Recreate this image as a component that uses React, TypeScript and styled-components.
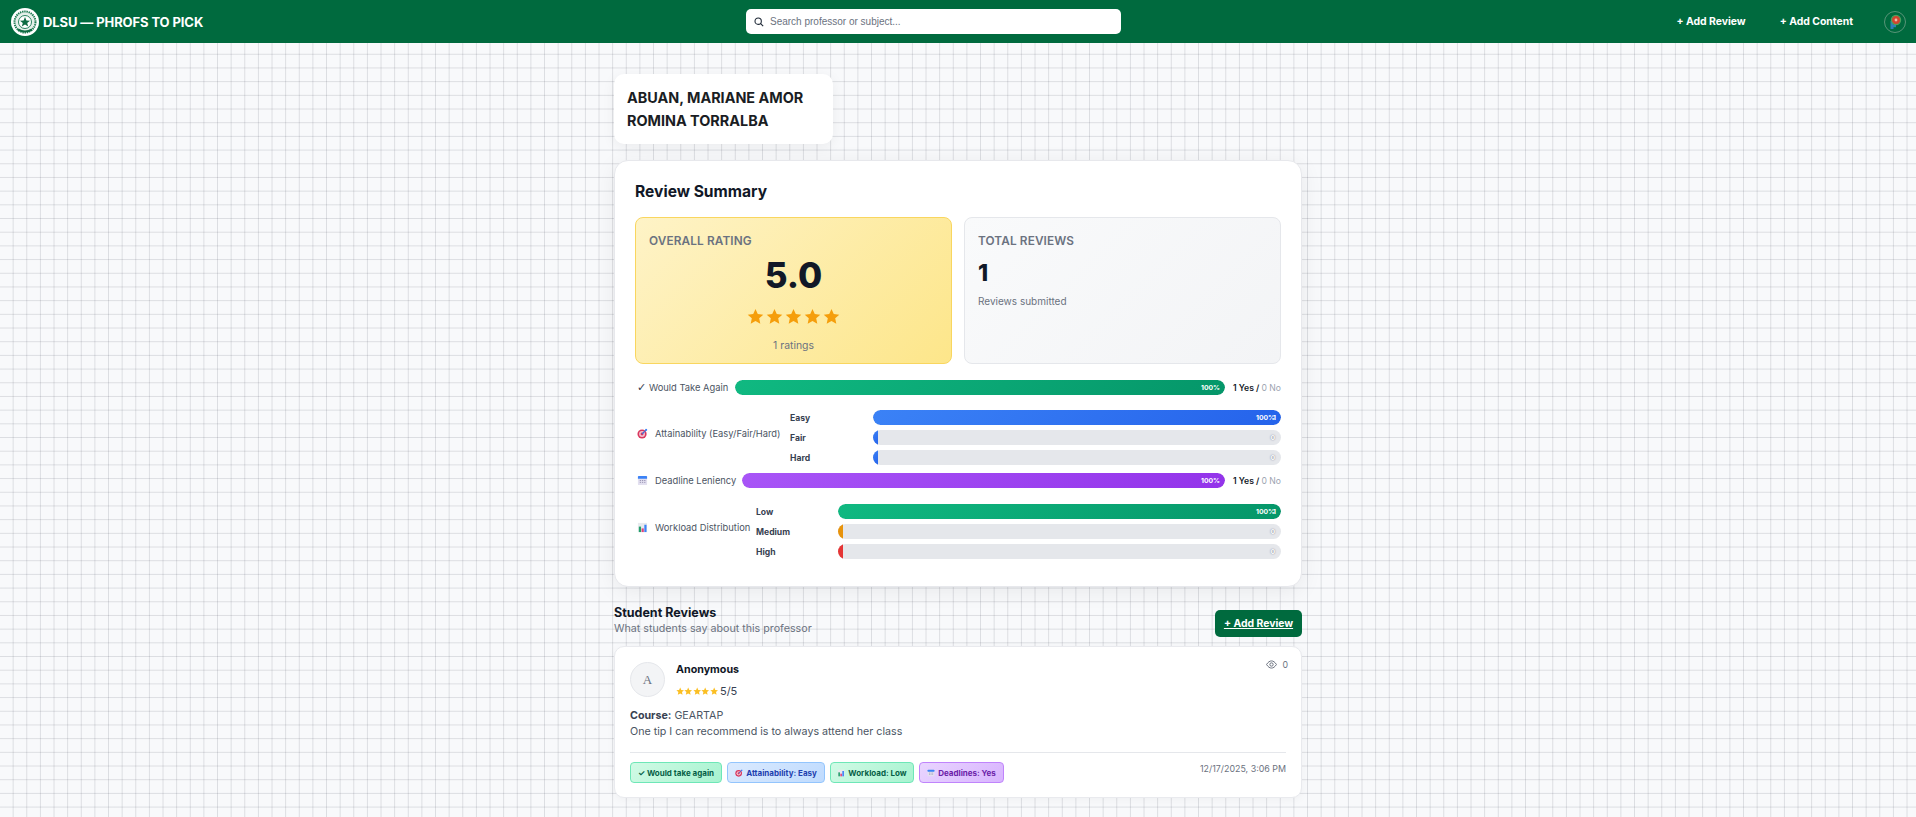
import React from "react";
import styled, { createGlobalStyle } from "styled-components";

const Global = createGlobalStyle`
  html, body { margin: 0; padding: 0; }
  body {
    font-family: Inter, "Noto Sans", sans-serif;
    background-color: #f8f9fb;
    background-image:
      linear-gradient(to right, transparent calc(100% - 1px), rgba(60,65,80,.15) calc(100% - 1px)),
      linear-gradient(to bottom, transparent calc(100% - 1px), rgba(60,65,80,.15) calc(100% - 1px));
    background-size: 13.63px 13.7px;
    color: #111827;
  }
  * { box-sizing: border-box; }
`;

const Header = styled.header`
  height: 43px;
  background: #006a3e;
  display: grid;
  grid-template-columns: 735px 375px 1fr;
  align-items: center;
  padding: 0 10px 0 11px;
`;
const Brand = styled.div`display: flex; align-items: center; gap: 4px;`;
const BrandName = styled.span`
  color: #fff; font-size: 13px; font-weight: 700; letter-spacing: -.1px; white-space: nowrap;
`;
const Search = styled.div`
  height: 25px; background: #fff; border-radius: 5px; display: flex; align-items: center;
  gap: 6px; padding-left: 8px; font-family: "Liberation Sans", Arial, sans-serif; font-size: 10px; color: #6b7280;
`;
const Nav = styled.nav`display: flex; align-items: center; justify-content: flex-end;`;
const NavLink = styled.a<{ $mr: number }>`
  color: #fff; font-size: 10.4px; font-weight: 700; white-space: nowrap; margin-right: ${p => p.$mr}px;
`;
const Main = styled.main`
  width: 688px; margin: 0 auto; padding: 31px 0 20px;
`;
const NameCard = styled.div`
  width: 219px; height: 70px; background: #fff; border-radius: 10px; padding: 12px 13px;
  box-shadow: 0 3px 14px rgba(0,0,0,.06); font-size: 14.4px; font-weight: 700; line-height: 23px; color: #1a1d23;
`;
const SummaryCard = styled.section`
  margin-top: 16px; height: 427px; background: #fff; border: 1px solid #e7e8ec; border-radius: 14px;
  padding: 21px 20px 0; box-shadow: 0 4px 22px rgba(0,0,0,.07);
`;
const SummaryTitle = styled.h2`
  margin: 0; font-size: 15.6px; line-height: 20px; font-weight: 700; color: #111827;
`;
const Stats = styled.div`display: grid; grid-template-columns: 1fr 1fr; gap: 12px; margin-top: 15px;`;
const StatBox = styled.div<{ $gold?: boolean }>`
  height: 147px; border-radius: 8px; padding: 15px 13px 0;
  border: 1px solid ${p => (p.$gold ? "#f9d65f" : "#e5e7eb")};
  background: ${p => (p.$gold ? "linear-gradient(135deg,#fef3c7,#fde68a)" : "linear-gradient(135deg,#f9fafb,#f3f4f6)")};
`;
const StatLabel = styled.div`
  font-size: 11.8px; line-height: 16px; font-weight: 600; letter-spacing: .12px; color: #6b7280; text-transform: uppercase;
`;
const BigRating = styled.div`
  font-size: 35px; font-weight: 800; line-height: 42px; text-align: center; margin-top: 5px; color: #111827;
`;
const StarRow = styled.div<{ $gap: number }>`
  display: flex; justify-content: center; gap: ${p => p.$gap}px;
`;
const StarsBig = styled(StarRow)`margin-top: 12px;`;
const RatingCount = styled.div`
  text-align: center; font-size: 10.4px; line-height: 14px; color: #6b7280; margin-top: 14px;
`;
const TotalNum = styled.div`font-size: 23px; font-weight: 800; line-height: 30px; margin-top: 9px;`;
const TotalSub = styled.div`font-size: 10px; line-height: 14px; color: #6b7280; margin-top: 6px;`;
const Metrics = styled.div`margin-top: 16px; display: flex; flex-direction: column; gap: 8px;`;
const Metric = styled.div<{ $mt?: number }>`display: flex; align-items: center; margin-top: ${p => p.$mt ?? 0}px;`;
const MetricLabel = styled.div<{ $w: number; $pb?: number }>`
  width: ${p => p.$w}px; flex: none; display: flex; align-items: center; font-size: 9.35px; color: #4b5563; white-space: nowrap;
  padding-bottom: ${p => p.$pb ?? 0}px;
`;
const MetricIcon = styled.span<{ $w: number }>`
  width: ${p => p.$w}px; flex: none; display: flex; justify-content: flex-start; padding-left: 2px; color: #374151;
  font-family: "DejaVu Sans", sans-serif; font-size: 11px; line-height: 12px;
`;
const Track = styled.div`
  flex: 1; height: 15px; background: #e5e7eb; border-radius: 8px; position: relative; overflow: hidden;
`;
const Fill = styled.div<{ $c: string }>`
  height: 100%; min-width: 5px; border-radius: 8px 0 0 8px; background: ${p => p.$c};
`;
const FullFill = styled(Fill)`border-radius: 8px;`;
const PctText = styled.span<{ $r: number }>`
  position: absolute; right: ${p => p.$r}px; top: 0; line-height: 15px; font-size: 6.8px; font-weight: 700; color: #fff;
`;
const ZeroText = styled(PctText)`text-shadow: 0 0 1px #8b8f98, 0 0 2px #aab;`;
const YesNo = styled.div`
  width: 56px; flex: none; padding-left: 8px; font-size: 8.6px; font-weight: 600; color: #111827; white-space: nowrap;
`;
const No = styled.span`color: #9ca3af; font-weight: 400;`;
const Stack = styled.div`flex: 1; display: flex; flex-direction: column; gap: 5px;`;
const StackRow = styled.div`display: flex; align-items: center;`;
const StackLabel = styled.div<{ $w: number }>`
  width: ${p => p.$w}px; flex: none; font-size: 8.6px; font-weight: 700; color: #374151;
`;
const ReviewsHead = styled.div`
  display: flex; justify-content: space-between; align-items: flex-start; margin-top: 18px; height: 41px;
`;
const ReviewsTitle = styled.h3`margin: 0; font-size: 12.5px; line-height: 16px; font-weight: 700; color: #111827;`;
const ReviewsSub = styled.div`font-size: 10.7px; line-height: 15px; color: #6b7280;`;
const AddBtn = styled.a`
  margin-top: 5px; width: 87px; height: 27px; background: #006a3e; color: #fff; border-radius: 5px;
  display: flex; align-items: center; justify-content: center; font-size: 10.4px; font-weight: 700; text-decoration: underline;
`;
const ReviewCard = styled.article`
  height: 152px; background: #fff; border: 1px solid #e9eaee; border-radius: 10px; padding: 15px 15px 0;
  position: relative; box-shadow: 0 2px 10px rgba(0,0,0,.04);
`;
const Author = styled.div`display: flex; gap: 11px;`;
const Avatar = styled.div`
  width: 35px; height: 35px; border-radius: 50%; background: #f3f4f6; border: 1px solid #e5e7eb; flex: none;
  display: flex; align-items: center; justify-content: center;
  font-family: "Liberation Serif", serif; font-size: 13px; color: #6b7280;
`;
const AuthorName = styled.div`font-size: 10.7px; font-weight: 700; line-height: 14px; margin-top: 1px; color: #111827;`;
const RatingLine = styled.div`
  display: flex; align-items: center; gap: 2px; margin-top: 7px; font-size: 11px; line-height: 14px; color: #374151;
`;
const Views = styled.div`
  position: absolute; top: 12px; right: 13px; display: flex; align-items: center; gap: 5px; font-size: 8.8px; color: #6b7280;
`;
const CourseLine = styled.div`margin-top: 10px; font-size: 10.7px; line-height: 16px; color: #4b5563;`;
const CourseKey = styled.b`color: #374151; font-weight: 700;`;
const Footer = styled.div`
  margin-top: 12px; border-top: 1px solid #e5e7eb; padding-top: 9px; display: flex; justify-content: space-between; align-items: flex-start;
`;
const Chips = styled.div`display: flex; gap: 5px;`;
const Chip = styled.div<{ $w: number; $bg: string; $bd: string; $c: string }>`
  width: ${p => p.$w}px; height: 21px; border-radius: 4px; display: flex; align-items: center; justify-content: center; gap: 3px;
  font-size: 8px; font-weight: 700; white-space: nowrap;
  background: ${p => p.$bg}; border: 1px solid ${p => p.$bd}; color: ${p => p.$c};
`;
const DateText = styled.div`font-size: 8.9px; color: #6b7280; line-height: 12px; margin-top: 1px;`;

const Star = ({ s, c }: { s: number; c: string }) => (
  <svg width={s} height={s} viewBox="0 0 24 24"><polygon fill={c} points="12,1.5 15.2,8.6 23,9.4 17.2,14.6 18.8,22.3 12,18.4 5.2,22.3 6.8,14.6 1,9.4 8.8,8.6" /></svg>
);
const Logo = () => (
  <svg width="28" height="28" viewBox="0 0 28 28">
    <circle cx="14" cy="14" r="14" fill="#fff" />
    <circle cx="14" cy="14" r="10.5" fill="#e4efe9" stroke="#1d7a52" strokeWidth="2" strokeDasharray="1.4 .8" />
    <circle cx="14" cy="14" r="6.5" fill="#fff" stroke="#2a8460" strokeWidth="1" />
    <polygon fill="#0e6b43" points="14,9 15.4,12.6 19,12.8 16.2,15 17.2,18.6 14,16.6 10.8,18.6 11.8,15 9,12.8 12.6,12.6" />
    <path d="M7 21.5q7 4 14 0" stroke="#0e6b43" strokeWidth="2.2" fill="none" />
  </svg>
);
const Badge = () => (
  <svg width="22" height="22" viewBox="0 0 22 22">
    <circle cx="11" cy="11" r="10.5" fill="none" stroke="#6f9e86" strokeWidth=".8" />
    <path d="M8 10v8" stroke="#2c7fb8" strokeWidth="3" />
    <path d="M8 15h4" stroke="#2c7fb8" strokeWidth="2.4" />
    <circle cx="12" cy="9" r="4.6" fill="#d2452f" stroke="#4aa05f" strokeWidth="1.2" />
    <circle cx="12" cy="9" r="1.4" fill="#f2b8a8" />
  </svg>
);
const Target = ({ s = 11 }: { s?: number }) => (
  <svg width={s} height={s} viewBox="0 0 12 12">
    <circle cx="5.5" cy="6.5" r="5" fill="#d9375e" />
    <circle cx="5.5" cy="6.5" r="3.2" fill="#f3c6d2" />
    <circle cx="5.5" cy="6.5" r="1.6" fill="#d9375e" />
    <path d="M5.5 6.5 10 2" stroke="#3b6fd8" strokeWidth="1.3" />
    <path d="M9 1h2v2h-2z" fill="#3b82f6" />
  </svg>
);
const Calendar = ({ s = 11 }: { s?: number }) => (
  <svg width={s} height={s} viewBox="0 0 12 12">
    <rect x="1" y="1" width="10" height="10" rx="1" fill="#e3e0f0" />
    <path d="M1 2a1 1 0 0 1 1-1h8a1 1 0 0 1 1 1v2H1z" fill="#3b82f6" />
    <path d="M3 6h1.4M5.4 6h1.4M7.8 6h1.4M3 8h1.4M5.4 8h1.4M7.8 8h1.4" stroke="#9690b0" strokeWidth="1" />
  </svg>
);
const Chart = ({ s = 11 }: { s?: number }) => (
  <svg width={s} height={s} viewBox="0 0 12 12">
    <rect x="1" y="1" width="10" height="10" fill="#e8eaee" />
    <rect x="2" y="5" width="2.4" height="6" fill="#22a06b" />
    <rect x="5" y="7" width="2.4" height="4" fill="#e0457b" />
    <rect x="8" y="3" width="2.4" height="8" fill="#3b82f6" />
  </svg>
);
const Eye = () => (
  <svg width="11" height="9" viewBox="0 0 20 16" fill="none" stroke="#6b7280" strokeWidth="1.8">
    <path d="M1 8c3-4.700 6-6.500 9-6.500s6 1.800 9 6.500c-3 4.700-6 6.500-9 6.500S4 12.700 1 8z" />
    <circle cx="10" cy="8" r="3" />
  </svg>
);
const SearchIcon = () => (
  <svg width="10" height="10" viewBox="0 0 12 12" fill="none" stroke="#1f2937" strokeWidth="1.3">
    <circle cx="5" cy="5" r="3.800" />
    <path d="M8 8l3 3" />
  </svg>
);

const green = "linear-gradient(135deg,#10b981,#059669)";
const blue = "linear-gradient(135deg,#3b82f6,#2563eb)";
const purple = "linear-gradient(135deg,#a855f7,#9333ea)";

const Bar = ({ pct, c, right }: { pct: number; c: string; right?: boolean }) => (
  <Track>
    {pct === 100 ? <FullFill $c={c} /> : <Fill $c={c} style={{ width: 5 }} />}
    {pct === 100 && <PctText $r={right ? 6 : 5}>100%</PctText>}
    {right && pct === 100 && <PctText $r={5}>1</PctText>}
    {right && pct === 0 && <ZeroText $r={6}>0</ZeroText>}
  </Track>
);

export default function App() {
  return (
    <>
      <Global />
      <Header>
        <Brand>
          <Logo />
          <BrandName>DLSU — PHROFS TO PICK</BrandName>
        </Brand>
        <Search>
          <SearchIcon />
          <span>Search professor or subject...</span>
        </Search>
        <Nav>
          <NavLink $mr={34}>+ Add Review</NavLink>
          <NavLink $mr={31}>+ Add Content</NavLink>
          <Badge />
        </Nav>
      </Header>
      <Main>
        <NameCard>ABUAN, MARIANE AMOR ROMINA TORRALBA</NameCard>
        <SummaryCard>
          <SummaryTitle>Review Summary</SummaryTitle>
          <Stats>
            <StatBox $gold>
              <StatLabel>Overall Rating</StatLabel>
              <BigRating>5.0</BigRating>
              <StarsBig $gap={2}>{[0, 1, 2, 3, 4].map(i => <Star key={i} s={17} c="#f59e0b" />)}</StarsBig>
              <RatingCount>1 ratings</RatingCount>
            </StatBox>
            <StatBox>
              <StatLabel>Total Reviews</StatLabel>
              <TotalNum>1</TotalNum>
              <TotalSub>Reviews submitted</TotalSub>
            </StatBox>
          </Stats>
          <Metrics>
            <Metric>
              <MetricLabel $w={100}><MetricIcon $w={14}>✓</MetricIcon>Would Take Again</MetricLabel>
              <Bar pct={100} c={green} />
              <YesNo>1 Yes / <No>0 No</No></YesNo>
            </Metric>
            <Metric $mt={7}>
              <MetricLabel $w={155} $pb={8}><MetricIcon $w={20}><Target /></MetricIcon>Attainability (Easy/Fair/Hard)</MetricLabel>
              <Stack>
                <StackRow><StackLabel $w={83}>Easy</StackLabel><Bar pct={100} c={blue} right /></StackRow>
                <StackRow><StackLabel $w={83}>Fair</StackLabel><Bar pct={0} c={blue} right /></StackRow>
                <StackRow><StackLabel $w={83}>Hard</StackLabel><Bar pct={0} c={blue} right /></StackRow>
              </Stack>
            </Metric>
            <Metric>
              <MetricLabel $w={107}><MetricIcon $w={20}><Calendar /></MetricIcon>Deadline Leniency</MetricLabel>
              <Bar pct={100} c={purple} />
              <YesNo>1 Yes / <No>0 No</No></YesNo>
            </Metric>
            <Metric $mt={8}>
              <MetricLabel $w={121} $pb={9}><MetricIcon $w={20}><Chart /></MetricIcon>Workload Distribution</MetricLabel>
              <Stack>
                <StackRow><StackLabel $w={82}>Low</StackLabel><Bar pct={100} c={green} right /></StackRow>
                <StackRow><StackLabel $w={82}>Medium</StackLabel><Bar pct={0} c="#e8930c" right /></StackRow>
                <StackRow><StackLabel $w={82}>High</StackLabel><Bar pct={0} c="#e53535" right /></StackRow>
              </Stack>
            </Metric>
          </Metrics>
        </SummaryCard>
        <ReviewsHead>
          <div>
            <ReviewsTitle>Student Reviews</ReviewsTitle>
            <ReviewsSub>What students say about this professor</ReviewsSub>
          </div>
          <AddBtn>+ Add Review</AddBtn>
        </ReviewsHead>
        <ReviewCard>
          <Views><Eye /><span>0</span></Views>
          <Author>
            <Avatar>A</Avatar>
            <div>
              <AuthorName>Anonymous</AuthorName>
              <RatingLine>
                <StarRow $gap={0}>{[0, 1, 2, 3, 4].map(i => <Star key={i} s={8.4} c="#fbbf24" />)}</StarRow>
                <span>5/5</span>
              </RatingLine>
            </div>
          </Author>
          <CourseLine>
            <div><CourseKey>Course:</CourseKey> GEARTAP</div>
            <div>One tip I can recommend is to always attend her class</div>
          </CourseLine>
          <Footer>
            <Chips>
              <Chip $w={92} $bg="linear-gradient(135deg,#d1fae5,#a7f3d0)" $bd="#6ee7b7" $c="#065f46">✓ Would take again</Chip>
              <Chip $w={98} $bg="linear-gradient(135deg,#dbeafe,#bfdbfe)" $bd="#93c5fd" $c="#1e40af"><Target s={8} />Attainability: Easy</Chip>
              <Chip $w={84} $bg="linear-gradient(135deg,#d1fae5,#a7f3d0)" $bd="#6ee7b7" $c="#065f46"><Chart s={8} />Workload: Low</Chip>
              <Chip $w={85} $bg="linear-gradient(135deg,#e9d5ff,#d8b4fe)" $bd="#c084fc" $c="#6b21a8"><Calendar s={8} />Deadlines: Yes</Chip>
            </Chips>
            <DateText>12/17/2025, 3:06 PM</DateText>
          </Footer>
        </ReviewCard>
      </Main>
    </>
  );
}
